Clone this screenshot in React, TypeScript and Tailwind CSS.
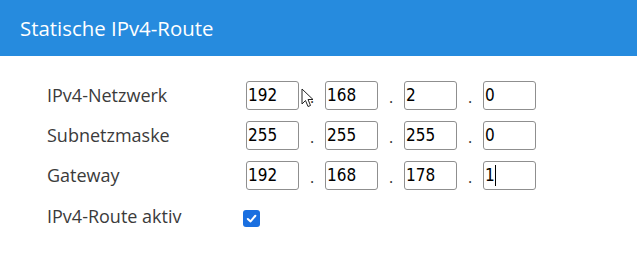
import { useState } from 'react'

type Row = { label: string; octets: string[] }

const ROWS: Row[] = [
  { label: 'IPv4-Netzwerk', octets: ['192', '168', '2', '0'] },
  { label: 'Subnetzmaske', octets: ['255', '255', '255', '0'] },
  { label: 'Gateway', octets: ['192', '168', '178', '1'] },
]

function Octet({ value, caret }: { value: string; caret?: boolean }) {
  return (
    <div className="relative w-[53px] h-[29px] border border-[#8f8f8f] rounded-[3px] bg-white flex items-center pl-[1px] text-[17px] text-black font-['DejaVu_Sans_Condensed','DejaVu_Sans',sans-serif]">
      <span>{value}</span>
      {caret && <span className="w-px h-[21px] bg-black" />}
    </div>
  )
}

function Cursor() {
  return (
    <svg className="absolute left-[301px] top-[88px]" width="14" height="20" viewBox="0 0 14 20">
      <path d="M1 1 L1 16 L4.5 12.5 L7 18.5 L9.5 17.5 L7 11.5 L12 11.5 Z" fill="white" stroke="#222" strokeWidth="1" strokeLinejoin="round" />
    </svg>
  )
}

export default function App() {
  const [active, setActive] = useState(true)

  return (
    <div className="relative w-[637px] h-[274px] bg-white font-['Open_Sans',sans-serif]">
      {/* Header */}
      <header className="h-14 bg-[#268bde] flex items-center px-5">
        <h1 className="text-white text-[20.4px] leading-none">Statische IPv4-Route</h1>
      </header>

      {/* Form */}
      <div className="pl-[47px] pt-[25px] flex flex-col gap-[11px]">
        {ROWS.map((row, i) => (
          <div key={row.label} className="flex items-center h-[29px]">
            <span className="w-[199px] text-[18px] text-[#3b3b3b]">{row.label}</span>
            <div className="flex items-center">
              {row.octets.map((o, j) => (
                <div key={j} className="flex items-center">
                  {j > 0 && <span className="w-[26px] text-center text-[16px] text-[#333] pt-[2px]">.</span>}
                  <Octet value={o} caret={i === 2 && j === 3} />
                </div>
              ))}
            </div>
          </div>
        ))}
        <div className="flex items-center h-[29px] mt-[1px]">
          <span className="w-[196px] text-[18px] text-[#3b3b3b]">IPv4-Route aktiv</span>
          <button
            onClick={() => setActive(a => !a)}
            className={`w-[17px] h-[17px] rounded-[3px] flex items-center justify-center mt-[3px] ${active ? 'bg-[#1a6fe0]' : 'border border-[#767676] bg-white'}`}
          >
            {active && (
              <svg width="11" height="11" viewBox="0 0 12 12">
                <path d="M2 6.5 L5 9.2 L10.2 3" fill="none" stroke="white" strokeWidth="2.2" strokeLinecap="round" strokeLinejoin="round" />
              </svg>
            )}
          </button>
        </div>
      </div>

      <Cursor />
    </div>
  )
}
